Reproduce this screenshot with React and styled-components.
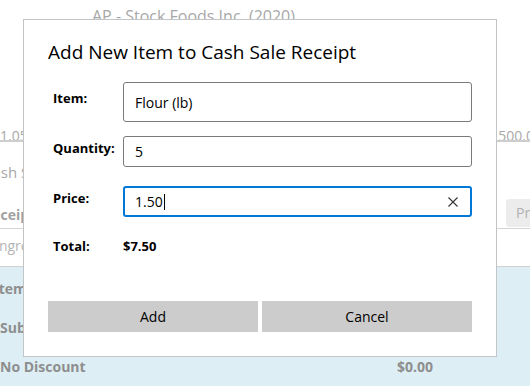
import React from "react";
import styled, { createGlobalStyle } from "styled-components";

const GlobalStyle = createGlobalStyle`
  html, body {
    margin: 0;
    padding: 0;
    background: #ffffff;
  }
  body {
    font-family: "Open Sans", "Noto Sans", sans-serif;
    width: 530px;
    height: 386px;
    overflow: hidden;
  }
`;

const App = () => {
  return (
    <>
      <GlobalStyle />
      <Page>
        <Header>AP - Stock Foods Inc. (2020)</Header>
        <ValueRow>
          <ValueText>1.05</ValueText>
          <ValueText right>500.00</ValueText>
        </ValueRow>
        <SectionTitle>Cash Sale Receipts</SectionTitle>
        <Toolbar>
          <ToolbarLabel>Receipts</ToolbarLabel>
          <GhostButton>Print</GhostButton>
        </Toolbar>
        <HintRow>Ingredients</HintRow>
        <SummaryPanel>
          <SummaryLine indent={-6}>Items</SummaryLine>
          <SummaryLine indent={0}>Subtotal</SummaryLine>
          <SummaryLine indent={0}>
            No Discount
            <SummaryAmount>$0.00</SummaryAmount>
          </SummaryLine>
        </SummaryPanel>
      </Page>

      <Dialog>
        <DialogTitle>Add New Item to Cash Sale Receipt</DialogTitle>
        <Form>
          <FieldRow gap={0}>
            <Label>Item:</Label>
            <TextBox tall>Flour (lb)</TextBox>
          </FieldRow>
          <FieldRow gap={14}>
            <Label>Quantity:</Label>
            <TextBox>5</TextBox>
          </FieldRow>
          <FieldRow gap={19}>
            <Label>Price:</Label>
            <TextBox focused>
              <BoxValue>
                1.50
                <Caret />
              </BoxValue>
              <ClearIcon viewBox="0 0 10 10">
                <path d="M0.5 0.5 L9.5 9.5 M9.5 0.5 L0.5 9.5" />
              </ClearIcon>
            </TextBox>
          </FieldRow>
          <TotalRow>
            <Label plain>Total:</Label>
            <TotalValue>$7.50</TotalValue>
          </TotalRow>
        </Form>
        <ButtonBar>
          <DialogButton>Add</DialogButton>
          <DialogButton>Cancel</DialogButton>
        </ButtonBar>
      </Dialog>
    </>
  );
};

const Page = styled.div`
  display: flex;
  flex-direction: column;
  width: 530px;
  height: 386px;
  overflow: hidden;
  color: #a3a3a3;
`;
const Header = styled.div`
  height: 30px;
  padding: 5px 0 0 92px;
  box-sizing: border-box;
  font-size: 16px;
  line-height: 22px;
  color: #a8a8a8;
`;
const ValueRow = styled.div`
  display: flex;
  justify-content: space-between;
  margin-top: 96px;
  height: 14px;
  overflow: hidden;
  border-bottom: 2px solid #cdcdcd;
`;
const ValueText = styled.span`
  font-size: 14px;
  line-height: 18px;
  margin-top: 1px;
  color: #a8a8a8;
  margin-right: ${({ right }) => (right ? "-12px" : "0")};
`;
const SectionTitle = styled.div`
  margin-top: 20px;
  margin-left: -17px;
  font-size: 15px;
  line-height: 20px;
  color: #a8a8a8;
  white-space: nowrap;
`;
const Toolbar = styled.div`
  display: flex;
  align-items: center;
  justify-content: space-between;
  margin-top: 12px;
  height: 34px;
  border-bottom: 1px solid #d4d4d4;
  overflow: hidden;
`;
const ToolbarLabel = styled.span`
  margin-left: -17px;
  padding-top: 6px;
  font-size: 14px;
  font-weight: 700;
  color: #a0a0a0;
`;
const GhostButton = styled.div`
  width: 40px;
  height: 28px;
  margin-right: -26px;
  margin-top: 3px;
  padding-left: 10px;
  border-radius: 3px;
  background: #ececec;
  font-size: 14px;
  line-height: 27px;
  color: #b0b0b0;
`;
const HintRow = styled.div`
  height: 37px;
  margin-left: -5px;
  font-size: 14px;
  line-height: 34px;
  color: #b4b4b4;
  border-bottom: 1px solid #d0d0d0;
`;
const SummaryPanel = styled.div`
  flex: 1;
  display: flex;
  flex-direction: column;
  gap: 20px;
  padding-top: 12px;
  background: #ddeef5;
`;
const SummaryLine = styled.div`
  position: relative;
  margin-left: ${({ indent }) => indent}px;
  font-size: 14px;
  font-weight: 700;
  line-height: 19px;
  color: #8e8e8e;
  white-space: nowrap;
`;
const SummaryAmount = styled.span`
  position: absolute;
  left: 397px;
`;

const Dialog = styled.div`
  position: absolute;
  top: 19px;
  left: 23px;
  width: 474px;
  height: 338px;
  box-sizing: border-box;
  display: flex;
  flex-direction: column;
  padding: 18px 24px 24px 24px;
  background: #ffffff;
  border: 1px solid #c2c5c8;
  color: #000000;
`;
const DialogTitle = styled.h1`
  margin: 0;
  font-size: 19px;
  font-weight: 400;
  line-height: 28px;
`;
const Form = styled.div`
  display: flex;
  flex-direction: column;
  margin-top: 16px;
`;
const FieldRow = styled.div`
  display: grid;
  grid-template-columns: 75px 1fr;
  align-items: center;
  margin-top: ${({ gap }) => gap}px;
`;
const Label = styled.span`
  padding-left: 5px;
  padding-bottom: ${({ plain }) => (plain ? "0" : "8px")};
  font-size: 13px;
  font-weight: 700;
  line-height: 18px;
`;
const TextBox = styled.div`
  display: flex;
  align-items: center;
  justify-content: space-between;
  box-sizing: border-box;
  height: ${({ tall }) => (tall ? "40px" : "31px")};
  padding: 0 11px 0 ${({ focused }) => (focused ? "10px" : "11px")};
  border: ${({ focused }) =>
    focused ? "2px solid #0078d7" : "1px solid #7a7a7a"};
  border-radius: 3px;
  font-size: 14px;
  color: #000000;
`;
const BoxValue = styled.span`
  display: flex;
  align-items: center;
`;
const Caret = styled.span`
  display: inline-block;
  width: 1px;
  height: 16px;
  margin-left: 1px;
  background: #000000;
`;
const ClearIcon = styled.svg`
  width: 10px;
  height: 10px;
  margin-right: 1px;
  fill: none;
  stroke: #333333;
  stroke-width: 1.1;
`;
const TotalRow = styled.div`
  display: grid;
  grid-template-columns: 75px 1fr;
  margin-top: 20px;
`;
const TotalValue = styled.span`
  font-size: 13px;
  font-weight: 700;
  line-height: 18px;
`;
const ButtonBar = styled.div`
  display: grid;
  grid-template-columns: 1fr 1fr;
  gap: 4px;
  margin-top: auto;
`;
const DialogButton = styled.div`
  height: 31px;
  background: #cccccc;
  font-size: 14px;
  line-height: 31px;
  text-align: center;
  color: #000000;
`;

export default App;
